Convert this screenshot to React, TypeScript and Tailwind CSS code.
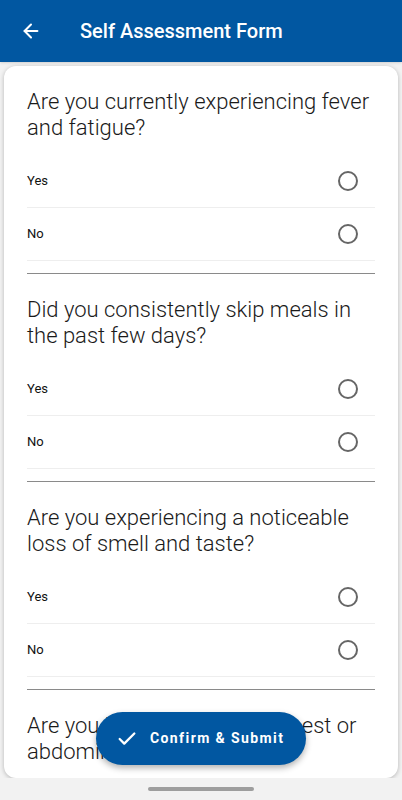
import { ArrowLeft, Check } from "lucide-react";

const questions = [
  "Are you currently experiencing fever and fatigue?",
  "Did you consistently skip meals in the past few days?",
  "Are you experiencing a noticeable loss of smell and taste?",
  "Are you having pain in the chest or abdominal region?",
];

function Radio() {
  return <span className="h-[20px] w-[20px] rounded-full border-2 border-[#666666]" />;
}

function Question({ text }: { text: string }) {
  return (
    <div className="pt-[23px]">
      <p className="h-[52px] text-[22px] font-light leading-[26px] text-[#1a1a1a]">{text}</p>
      <div className="mt-[14px]">
        {["Yes", "No"].map((opt) => (
          <div
            key={opt}
            className="flex h-[53px] items-center justify-between border-b border-[#eeeeee] pr-[17px]"
          >
            <span className="text-[13px] text-[#111111]">{opt}</span>
            <Radio />
          </div>
        ))}
      </div>
      <div className="mt-[12px] h-px bg-[#8a8a8a]" />
    </div>
  );
}

export default function App() {
  return (
    <div
      className="relative flex h-[800px] w-[402px] flex-col overflow-hidden bg-[#f2f2f2]"
      style={{ fontFamily: "Roboto, 'Noto Sans', sans-serif" }}
    >
      <header className="flex h-[62px] shrink-0 items-center bg-[#0157a1] text-white shadow-sm">
        <ArrowLeft className="ml-[20px] h-[22px] w-[22px]" strokeWidth={2.2} />
        <h1 className="ml-[38px] text-[20px] font-medium">Self Assessment Form</h1>
      </header>

      <main className="flex-1 overflow-hidden px-[4px] pt-[4px]">
        <div className="h-[712px] overflow-hidden rounded-[12px] bg-white px-[23px] shadow-[0_1px_4px_rgba(0,0,0,0.25)]">
          {questions.map((q) => (
            <Question key={q} text={q} />
          ))}
        </div>
      </main>

      <div className="flex h-[22px] shrink-0 items-center justify-center">
        <div className="h-[4px] w-[106px] rounded-full bg-[#9e9e9e]" />
      </div>

      <button className="absolute left-[96px] top-[712px] flex h-[53px] w-[210px] items-center rounded-full bg-[#0157a1] pl-[20px] text-white shadow-[0_3px_6px_rgba(0,0,0,0.3)]">
        <Check className="h-[22px] w-[22px]" strokeWidth={2.5} />
        <span className="ml-[12px] text-[14px] font-bold tracking-[1.4px]">Confirm &amp; Submit</span>
      </button>
    </div>
  );
}
